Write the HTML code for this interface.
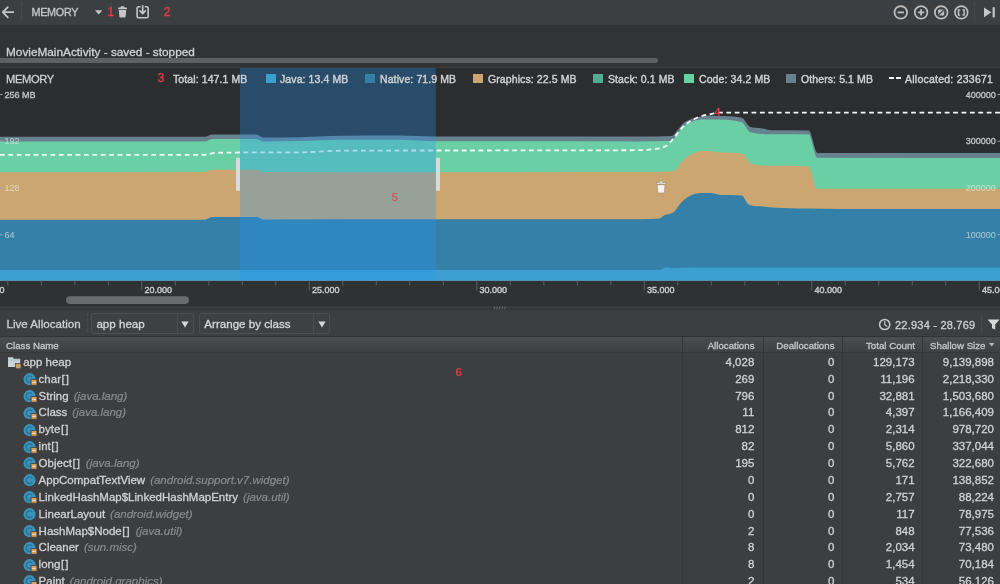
<!DOCTYPE html>
<html lang="en">
<head>
<meta charset="utf-8">
<title>Memory Profiler</title>
<style>
*{box-sizing:border-box;margin:0;padding:0}
html,body{width:1000px;height:584px;overflow:hidden;background:#3c3f41}
body{position:relative;font-family:"Liberation Sans",sans-serif;color:#c8c8c8;-webkit-text-stroke:.3px currentColor}
#root{position:absolute;left:0;top:0;width:1000px;height:584px;will-change:transform;transform:translateZ(0)}
.abs{position:absolute}
.t{position:absolute;white-space:nowrap;line-height:1}
#toolbar{left:0;top:0;width:1000px;height:25px;background:#3c3f41}
#session{left:0;top:25px;width:1000px;height:43px;background:#313335}
#chart{left:0;top:67px;width:1000px;height:243px;background:#2b2d2f}
#panel{left:0;top:310px;width:1000px;height:274px;background:#3c3e40}
.red{color:#e23a47;-webkit-text-stroke:.35px currentColor}
.leg{font-size:10.5px;letter-spacing:.1px;color:#d2d2d2;-webkit-text-stroke:.4px currentColor}
.sw{position:absolute;width:10px;height:9.8px}
.ax{font-size:9px;color:#cdcdcd;-webkit-text-stroke:.4px currentColor}
.axl{opacity:.9}
.axf{opacity:.7;color:#e6e6e6;-webkit-text-stroke:0}
.row{position:absolute;left:0;width:1000px;height:17px;font-size:11.5px;color:#d2d2d2}
.row .nm{position:absolute;top:0;white-space:nowrap;line-height:17px}
.row .pk{color:#8a8d8f;font-style:italic;margin-left:5px;-webkit-text-stroke:.2px currentColor}
.row .br{letter-spacing:1px;margin-left:.6px}
.row .n{position:absolute;top:0;text-align:right;line-height:17px;white-space:nowrap}
.hd{position:absolute;top:340.8px;font-size:9.7px;color:#c8c8c8;line-height:1;white-space:nowrap}
.vl{position:absolute;top:337px;width:1px;height:247px;background:#333537}
</style>
</head>
<body>
<div id="root">
<!-- ===== top toolbar ===== -->
<div id="toolbar" class="abs">
<svg class="abs" style="left:0;top:0" width="1000" height="25" viewBox="0 0 1000 25">
  <g stroke="#c6c6c6" stroke-width="1.8" fill="none" stroke-linecap="round" stroke-linejoin="round">
    <path d="M2.8 12.2 H13.3 M7.8 7.1 L2.8 12.2 L7.8 17.3"/>
  </g>
  <g stroke="#55585a" stroke-width="1" stroke-dasharray="1 1.5">
    <path d="M21.5 3 V20"/><path d="M111.5 3 V20"/><path d="M974.5 3 V20"/>
  </g>
  <path d="M95 10.3 H102.4 L98.7 14.6 Z" fill="#c6c6c6"/>
  <g fill="#c6c6c6">
    <rect x="118" y="7.6" width="9" height="1.5" rx=".4"/>
    <rect x="120.6" y="6.3" width="3.8" height="1.6" rx=".4"/>
    <path d="M118.8 9.8 H126.2 L125.6 16.8 Q125.5 17.6 124.7 17.6 H120.3 Q119.5 17.6 119.4 16.8 Z"/>
  </g>
  <g stroke="#c6c6c6" fill="none" stroke-width="1.6" stroke-linecap="round" stroke-linejoin="round">
    <path d="M140 6.7 H138.8 Q137.1 6.7 137.1 8.4 V16.1 Q137.1 17.8 138.8 17.8 H146.5 Q148.2 17.8 148.2 16.1 V8.4 Q148.2 6.7 146.5 6.7 H145.3"/>
    <path d="M142.65 5.8 V13.4 M140 10.9 L142.65 13.7 L145.3 10.9" stroke-width="1.7"/>
  </g>
  <g stroke="#bebebe" fill="none" stroke-width="1.7">
    <circle cx="900.8" cy="12.4" r="6.3"/>
    <circle cx="921.1" cy="12.4" r="6.3"/>
    <circle cx="941.2" cy="12.4" r="6.3"/>
    <circle cx="961.3" cy="12.4" r="6.3"/>
  </g>
  <g stroke="#bebebe" fill="none" stroke-width="1.8" stroke-linecap="butt">
    <path d="M897.6 12.4 H904"/>
    <path d="M917.9 12.4 H924.3 M921.1 9.2 V15.6"/>
    <path d="M960.2 9.9 H958.5 V14.9 H960.2 M962.4 9.9 H964.1 V14.9 H962.4" stroke-width="1.5"/>
  </g>
  <rect x="938.2" y="9.4" width="6" height="6" rx=".8" fill="#bebebe"/>
  <path d="M938.4 15.2 L944 9.6" stroke="#3c3f41" stroke-width="1.3"/>
  <path d="M984 7.4 L991.4 12.3 L984 17.2 Z" fill="#c6c6c6"/>
  <rect x="992.6" y="7.2" width="2.2" height="10.2" fill="#c6c6c6"/>
</svg>
<div class="t" style="left:31.5px;top:6.8px;font-size:10.8px;color:#c9c9c9;letter-spacing:-.3px">MEMORY</div>
<div class="t red" style="left:107.4px;top:6px;font-size:12px">1</div>
<div class="t red" style="left:163.8px;top:6px;font-size:12px">2</div>
</div>
<!-- ===== session strip ===== -->
<div id="session" class="abs">
<div class="t" style="left:6px;top:21.6px;font-size:11.8px;color:#d4d4d4">MovieMainActivity - saved - stopped</div>
<div class="abs" style="left:-4px;top:33px;width:661.5px;height:5px;border-radius:3px;background:#5e6163"></div>
</div>
<!-- ===== chart ===== -->
<div id="chart" class="abs">
<div class="abs" style="left:0;top:0;width:1000px;height:1px;background:#37383a"></div>
<svg class="abs" style="left:0;top:0" width="1000" height="243" viewBox="0 0 1000 243">
<rect x="0" y="213.6" width="1000" height="26" fill="#2e3233"/>
<path d="M0.0 69.8 C68.3 69.8 136.7 69.8 205.0 69.8 C207.3 69.8 209.7 67.4 212.0 67.4 C226.7 67.4 241.3 67.4 256.0 67.6 C258.3 67.6 260.7 70.4 263.0 70.4 C275.3 70.4 287.7 70.4 300.0 70.2 C313.3 70.0 326.7 68.9 340.0 68.8 C360.0 68.6 380.0 68.6 400.0 68.6 C412.0 68.6 424.0 69.6 436.0 69.6 C504.0 69.6 572.0 69.6 640.0 69.6 C650.7 69.6 661.3 69.6 672.0 69.0 C673.7 68.9 675.3 65.6 677.0 63.8 C679.4 61.2 681.8 57.6 684.2 55.6 C686.6 53.6 689.0 52.9 691.4 52.0 C694.8 50.7 698.3 49.8 701.7 49.2 C704.4 48.7 707.2 48.4 709.9 48.4 C712.6 48.4 715.4 48.9 718.1 49.0 C726.0 49.2 733.8 49.0 741.7 50.7 C744.5 51.3 747.2 58.6 750.0 59.7 C753.8 61.1 757.5 60.8 761.3 61.2 C764.7 61.6 768.1 63.2 771.5 63.2 C783.9 63.2 796.2 63.2 808.6 63.5 C811.6 63.6 814.6 86.0 817.6 86.0 C878.4 86.0 939.2 86.0 1000.0 86.0 L1000 213.6 L0 213.6 Z" fill="#67818f"/>
<path d="M0.0 74.5 C68.3 74.5 136.7 74.5 205.0 74.5 C207.3 74.5 209.7 72.0 212.0 72.0 C226.7 72.0 241.3 72.0 256.0 72.0 C258.3 72.0 260.7 74.4 263.0 74.4 C275.3 74.4 287.7 74.3 300.0 74.0 C313.3 73.7 326.7 72.8 340.0 72.8 C360.0 72.8 380.0 72.8 400.0 72.8 C412.0 72.8 424.0 74.2 436.0 74.2 C504.0 74.4 572.0 74.4 640.0 74.4 C650.3 74.4 660.5 74.4 670.8 74.1 C673.2 74.0 675.6 68.7 678.0 65.9 C680.1 63.5 682.1 60.4 684.2 58.7 C686.6 56.7 689.0 55.9 691.4 55.0 C694.8 53.7 698.3 52.6 701.7 52.6 C705.1 52.6 708.6 52.6 712.0 52.6 C721.9 52.6 731.8 52.6 741.7 55.2 C744.5 55.9 747.2 64.0 750.0 64.9 C757.2 67.2 764.3 67.2 771.5 67.2 C783.9 67.2 796.2 67.2 808.6 67.2 C811.5 67.2 814.5 90.8 817.4 90.8 C878.3 91.0 939.1 91.0 1000.0 91.0 L1000 213.6 L0 213.6 Z" fill="#6bcfa5"/>
<path d="M0.0 105.3 C68.3 105.3 136.7 105.3 205.0 105.0 C207.3 105.0 209.7 102.8 212.0 102.8 C226.7 102.8 241.3 102.8 256.0 102.8 C258.3 102.8 260.7 105.0 263.0 105.0 C320.7 105.2 378.3 105.2 436.0 105.2 C504.0 105.2 572.0 105.0 640.0 105.0 C651.3 105.0 662.7 105.0 674.0 103.9 C676.9 103.6 679.7 96.7 682.6 94.0 C685.4 91.3 688.2 89.1 691.0 87.6 C695.3 85.3 699.7 83.8 704.0 83.8 C710.1 83.8 716.1 85.5 722.2 85.6 C729.1 85.8 735.9 85.6 742.8 86.9 C745.5 87.4 748.3 95.9 751.0 96.7 C757.8 98.8 764.7 98.8 771.5 98.8 C783.8 98.8 796.2 98.8 808.5 99.4 C811.4 99.5 814.3 121.8 817.2 121.8 C878.1 121.8 939.1 121.8 1000.0 121.8 L1000 213.6 L0 213.6 Z" fill="#cba670"/>
<path d="M0.0 152.8 C68.3 152.8 136.7 152.8 205.0 152.8 C207.3 152.8 209.7 150.0 212.0 150.0 C227.0 150.0 242.0 150.0 257.0 150.0 C259.0 150.0 261.0 152.5 263.0 152.5 C320.7 152.5 378.3 152.3 436.0 152.3 C504.0 152.3 572.0 152.2 640.0 152.2 C646.2 152.2 652.3 152.2 658.5 151.8 C660.6 151.7 662.6 149.1 664.7 148.1 C667.8 146.7 670.8 147.5 673.9 145.0 C676.3 143.1 678.7 138.3 681.1 135.8 C683.8 133.0 686.6 130.7 689.3 129.2 C693.4 127.0 697.6 125.9 701.7 125.9 C704.4 125.9 707.2 125.9 709.9 125.9 C714.0 125.9 718.1 127.9 722.2 128.0 C728.7 128.1 735.2 128.0 741.7 128.6 C744.1 128.8 746.5 137.0 748.9 137.8 C753.7 139.5 758.5 139.2 763.3 139.5 C766.0 139.7 768.8 140.3 771.5 140.5 C783.8 141.4 796.2 141.3 808.5 141.5 C819.0 141.7 829.5 141.9 840.0 141.9 C893.3 142.0 946.7 142.0 1000.0 142.0 L1000 213.6 L0 213.6 Z" fill="#3480a9"/>
<path d="M0.0 203.0 C220.0 203.0 440.0 203.0 660.0 203.0 C662.0 203.0 664.0 200.3 666.0 200.3 C668.0 200.3 670.0 201.0 672.0 201.0 C681.3 201.0 690.7 200.6 700.0 200.6 C800.0 200.6 900.0 200.6 1000.0 200.6 L1000 213.6 L0 213.6 Z" fill="#3d9fd1"/>
<path d="M0.0 87.8 C68.3 87.8 136.7 87.8 205.0 87.8 C208.3 87.8 211.7 85.9 215.0 85.8 C243.3 85.3 271.7 85.4 300.0 85.3 C315.0 85.2 330.0 83.6 345.0 83.6 C443.3 83.4 541.7 83.6 640.0 83.2 C644.1 83.2 648.2 83.0 652.3 82.3 C657.1 81.5 661.9 81.8 666.7 78.6 C669.1 77.0 671.5 73.8 673.9 71.0 C676.3 68.2 678.7 64.3 681.1 61.8 C684.5 58.2 688.0 55.7 691.4 53.6 C694.8 51.5 698.3 50.1 701.7 49.0 C705.1 47.9 708.6 47.5 712.0 46.8 C714.0 46.4 716.1 45.7 718.1 45.7 C812.1 45.7 906.0 45.7 1000.0 45.7" fill="none" stroke="#f4f7f6" stroke-width="1.8" stroke-dasharray="4.8 3.6"/>
<path d="M7.8 213.6 V218.6 M41.3 213.6 V218.6 M74.8 213.6 V218.6 M108.3 213.6 V218.6 M141.8 213.6 V223.4 M175.3 213.6 V218.6 M208.8 213.6 V218.6 M242.3 213.6 V218.6 M275.8 213.6 V218.6 M309.3 213.6 V223.4 M342.8 213.6 V218.6 M376.3 213.6 V218.6 M409.8 213.6 V218.6 M443.3 213.6 V218.6 M476.8 213.6 V223.4 M510.3 213.6 V218.6 M543.8 213.6 V218.6 M577.3 213.6 V218.6 M610.8 213.6 V218.6 M644.3 213.6 V223.4 M677.8 213.6 V218.6 M711.3 213.6 V218.6 M744.8 213.6 V218.6 M778.3 213.6 V218.6 M811.8 213.6 V223.4 M845.3 213.6 V218.6 M878.8 213.6 V218.6 M912.3 213.6 V218.6 M945.8 213.6 V218.6 M979.3 213.6 V223.4" stroke="#5a5e60" stroke-width="1" fill="none"/>
<path d="M0 27.5 H2.5 M997.6 27.5 H1000 M0 74.2 H2.5 M997.6 74.2 H1000 M0 120.9 H2.5 M997.6 120.9 H1000 M0 167.6 H2.5 M997.6 167.6 H1000" stroke="#a0a2a3" stroke-width="1" fill="none"/>
<rect x="240" y="1" width="195.8" height="212.6" fill="rgba(35,149,245,0.30)"/>
<rect x="236" y="90.5" width="4" height="33.5" rx="1.6" fill="#d9dadb"/>
<rect x="436" y="90.5" width="4" height="33.5" rx="1.6" fill="#d9dadb"/>
<g fill="#f4f2f6" stroke="#5d5546" stroke-width=".5" stroke-opacity=".6"><rect x="656.6" y="115.5" width="9" height="1.6" rx=".5"/><rect x="659.3" y="114.3" width="3.6" height="1.6" rx=".5"/><path d="M657.3 117.7 h7.6 l-.5 7.4 q-.1 .8 -.9 .8 h-4.8 q-.8 0 -.9 -.8 z"/></g>
<rect x="66" y="229.3" width="123" height="7.6" rx="3.8" fill="#6a6b6d"/>
</svg>
<div class="t" style="left:6px;top:6.9px;font-size:11.2px;letter-spacing:-.4px;color:#d0d0d0">MEMORY</div>
<div class="t red" style="left:157.6px;top:4.9px;font-size:12.4px">3</div>
<div class="t leg" style="left:173px;top:7.2px">Total: 147.1 MB</div>
<div class="sw" style="left:266px;top:6.6px;background:#3d9fd1"></div><div class="t leg" style="left:280px;top:7.2px">Java: 13.4 MB</div>
<div class="sw" style="left:365px;top:6.6px;background:#3480a9"></div><div class="t leg" style="left:380px;top:7.2px">Native: 71.9 MB</div>
<div class="sw" style="left:473px;top:6.6px;background:#cba670"></div><div class="t leg" style="left:488px;top:7.2px">Graphics: 22.5 MB</div>
<div class="sw" style="left:593px;top:6.6px;background:#4fae8e"></div><div class="t leg" style="left:608px;top:7.2px">Stack: 0.1 MB</div>
<div class="sw" style="left:684px;top:6.6px;background:#6bcfa5"></div><div class="t leg" style="left:699px;top:7.2px">Code: 34.2 MB</div>
<div class="sw" style="left:786px;top:6.6px;background:#67818f"></div><div class="t leg" style="left:801px;top:7.2px">Others: 5.1 MB</div>
<div class="t leg" style="left:905px;top:7.2px;letter-spacing:0.24px">Allocated: 233671</div>
<div class="abs" style="left:889px;top:10px;width:5px;height:2.4px;background:#f4f4f4"></div><div class="abs" style="left:895.6px;top:10px;width:5px;height:2.4px;background:#f4f4f4"></div>
<div class="t ax axl" style="left:4.6px;top:23.5px">256 MB</div><div class="t ax axf" style="left:4.6px;top:70.2px">192</div><div class="t ax axf" style="left:4.6px;top:116.9px">128</div><div class="t ax axf" style="left:4.6px;top:163.6px">64</div>
<div class="t ax axl" style="right:4.3px;top:23.5px">400000</div><div class="t ax axl" style="right:4.3px;top:70.2px">300000</div><div class="t ax axf" style="right:4.3px;top:116.9px">200000</div><div class="t ax axf" style="right:4.3px;top:163.6px">100000</div>
<div class="t ax" style="left:-23.1px;top:219.4px">15.000</div><div class="t ax" style="left:144.4px;top:219.4px">20.000</div><div class="t ax" style="left:311.9px;top:219.4px">25.000</div><div class="t ax" style="left:479.4px;top:219.4px">30.000</div><div class="t ax" style="left:646.9px;top:219.4px">35.000</div><div class="t ax" style="left:814.4px;top:219.4px">40.000</div><div class="t ax" style="left:981.9px;top:219.4px">45.000</div>
<div class="t red" style="left:714.6px;top:40.2px;font-size:11px">4</div>
<div class="t red" style="left:391.4px;top:124.6px;font-size:11.5px;opacity:.8;-webkit-text-stroke:.15px currentColor">5</div>
<div class="abs" style="left:0;top:238.5px;width:1000px;height:4.5px;background:#393b3d;border-bottom:1px solid #323335"></div>
<svg class="abs" style="left:493px;top:239px" width="14" height="4"><path d="M1 3.4 L2 .6 M3.6 3.4 L4.6 .6 M6.2 3.4 L7.2 .6 M8.8 3.4 L9.8 .6 M11.4 3.4 L12.4 .6" stroke="#77797b" stroke-width=".8"/></svg>
</div>
<!-- ===== bottom panel ===== -->
<div id="panel" class="abs">
<div class="t" style="left:6.5px;top:7.7px;font-size:11.6px;color:#d0d0d0">Live Allocation</div>
<div class="abs" style="left:86.5px;top:4px;width:1px;height:18px;background:repeating-linear-gradient(#4e5153 0 1px,transparent 1px 2.5px)"></div>
<div class="abs" style="left:91px;top:3.3px;width:102.6px;height:20.3px;border:1px solid #4c4f51;border-radius:2.5px;background:#3e4143"></div><div class="abs" style="left:176.6px;top:5px;width:1px;height:18px;background:#4c4f51"></div><div class="t" style="left:96.4px;top:7.7px;font-size:11.6px;color:#d8d8d8">app heap</div><svg class="abs" style="left:181.2px;top:11px" width="8" height="7"><path d="M0.4 0.4 H7.6 L4 6.4 Z" fill="#d8d8d8"/></svg>
<div class="abs" style="left:198.9px;top:3.3px;width:131.3px;height:20.3px;border:1px solid #4c4f51;border-radius:2.5px;background:#3e4143"></div><div class="abs" style="left:313.2px;top:5px;width:1px;height:18px;background:#4c4f51"></div><div class="t" style="left:204.3px;top:7.7px;font-size:11.6px;color:#d8d8d8">Arrange by class</div><svg class="abs" style="left:317.8px;top:11px" width="8" height="7"><path d="M0.4 0.4 H7.6 L4 6.4 Z" fill="#d8d8d8"/></svg>
<svg class="abs" style="left:877px;top:6px" width="123" height="20" viewBox="877 6 123 20"><circle cx="884.7" cy="14.5" r="5.1" fill="none" stroke="#c8c8c8" stroke-width="1.5"/><path d="M884.7 11.4 V14.7 L886.9 16.4" fill="none" stroke="#c8c8c8" stroke-width="1.2" stroke-linecap="round"/><path d="M981.5 6 V22" stroke="#595c5e" stroke-dasharray="1 1.5"/><path d="M987.6 9.6 H999.6 L995.2 14.6 V19.6 L992 18.2 V14.6 Z" fill="#d8d8d8"/></svg>
<div class="t" style="left:895px;top:9.5px;font-size:11px;letter-spacing:.22px;color:#d0d0d0">22.934 - 28.769</div>
<div class="abs" style="left:0;top:25.9px;width:1000px;height:17.6px;background:linear-gradient(#4b4d4f,#3e4042);border-top:1px solid #303234;border-bottom:1px solid #35383a"></div>
</div>
<div class="hd" style="left:6px">Class Name</div><div class="hd" style="right:245.5px">Allocations</div><div class="hd" style="right:165.5px">Deallocations</div><div class="hd" style="right:85px">Total Count</div><div class="hd" style="right:14.5px">Shallow Size</div>
<svg class="abs" style="left:989.4px;top:342.6px" width="6" height="4"><path d="M0 0 H5.4 L2.7 3.4 Z" fill="#b8b8b8"/></svg>
<div class="vl" style="left:682px"></div><div class="vl" style="left:762.5px"></div><div class="vl" style="left:842px"></div><div class="vl" style="left:922px"></div>
<div class="row" style="top:353.90px"><svg class="abs" style="left:8px;top:3px" width="14" height="12" viewBox="0 0 14 12"><path d="M0 0.2 H4.8 L5.8 1.8 H12.2 V10 H0 Z" fill="#c9d4d8"/><rect x="0" y="2.6" width="12.2" height=".7" fill="#a3b1b7"/><rect x="7.6" y="6.4" width="5.4" height="5.4" fill="#c4a06a" stroke="#3c3f41" stroke-width=".7"/></svg><span class="nm" style="left:23.2px">app heap</span><span class="n" style="right:245.7px">4,028</span><span class="n" style="right:165.7px">0</span><span class="n" style="right:85.4px">129,173</span><span class="n" style="right:6px">9,139,898</span></div>
<div class="row" style="top:370.76px"><svg class="abs" style="left:22.6px;top:2.4px" width="15" height="13" viewBox="0 0 15 13"><circle cx="6.6" cy="6.2" r="6.1" fill="#3893bd"/><path d="M9.2 4.2 A3.3 3.3 0 1 0 9.2 8.2" fill="none" stroke="#2a556b" stroke-width="1.4" opacity=".55"/><rect x="8" y="6.6" width="6" height="5.6" fill="#d89f5a" stroke="#3c3e40" stroke-width=".8"/><rect x="9.2" y="8.9" width="3.6" height="1" fill="#f3dcbc"/></svg><span class="nm" style="left:38.6px">char<span class="br">[]</span></span><span class="n" style="right:245.7px">269</span><span class="n" style="right:165.7px">0</span><span class="n" style="right:85.4px">11,196</span><span class="n" style="right:6px">2,218,330</span></div>
<div class="row" style="top:387.62px"><svg class="abs" style="left:22.6px;top:2.4px" width="15" height="13" viewBox="0 0 15 13"><circle cx="6.6" cy="6.2" r="6.1" fill="#3893bd"/><path d="M9.2 4.2 A3.3 3.3 0 1 0 9.2 8.2" fill="none" stroke="#2a556b" stroke-width="1.4" opacity=".55"/><rect x="8" y="6.6" width="6" height="5.6" fill="#d89f5a" stroke="#3c3e40" stroke-width=".8"/><rect x="9.2" y="8.9" width="3.6" height="1" fill="#f3dcbc"/></svg><span class="nm" style="left:38.6px">String<span class="pk">(java.lang)</span></span><span class="n" style="right:245.7px">796</span><span class="n" style="right:165.7px">0</span><span class="n" style="right:85.4px">32,881</span><span class="n" style="right:6px">1,503,680</span></div>
<div class="row" style="top:404.48px"><svg class="abs" style="left:22.6px;top:2.4px" width="15" height="13" viewBox="0 0 15 13"><circle cx="6.6" cy="6.2" r="6.1" fill="#3893bd"/><path d="M9.2 4.2 A3.3 3.3 0 1 0 9.2 8.2" fill="none" stroke="#2a556b" stroke-width="1.4" opacity=".55"/><rect x="8" y="6.6" width="6" height="5.6" fill="#d89f5a" stroke="#3c3e40" stroke-width=".8"/><rect x="9.2" y="8.9" width="3.6" height="1" fill="#f3dcbc"/></svg><span class="nm" style="left:38.6px">Class<span class="pk">(java.lang)</span></span><span class="n" style="right:245.7px">11</span><span class="n" style="right:165.7px">0</span><span class="n" style="right:85.4px">4,397</span><span class="n" style="right:6px">1,166,409</span></div>
<div class="row" style="top:421.34px"><svg class="abs" style="left:22.6px;top:2.4px" width="15" height="13" viewBox="0 0 15 13"><circle cx="6.6" cy="6.2" r="6.1" fill="#3893bd"/><path d="M9.2 4.2 A3.3 3.3 0 1 0 9.2 8.2" fill="none" stroke="#2a556b" stroke-width="1.4" opacity=".55"/><rect x="8" y="6.6" width="6" height="5.6" fill="#d89f5a" stroke="#3c3e40" stroke-width=".8"/><rect x="9.2" y="8.9" width="3.6" height="1" fill="#f3dcbc"/></svg><span class="nm" style="left:38.6px">byte<span class="br">[]</span></span><span class="n" style="right:245.7px">812</span><span class="n" style="right:165.7px">0</span><span class="n" style="right:85.4px">2,314</span><span class="n" style="right:6px">978,720</span></div>
<div class="row" style="top:438.20px"><svg class="abs" style="left:22.6px;top:2.4px" width="15" height="13" viewBox="0 0 15 13"><circle cx="6.6" cy="6.2" r="6.1" fill="#3893bd"/><path d="M9.2 4.2 A3.3 3.3 0 1 0 9.2 8.2" fill="none" stroke="#2a556b" stroke-width="1.4" opacity=".55"/><rect x="8" y="6.6" width="6" height="5.6" fill="#d89f5a" stroke="#3c3e40" stroke-width=".8"/><rect x="9.2" y="8.9" width="3.6" height="1" fill="#f3dcbc"/></svg><span class="nm" style="left:38.6px">int<span class="br">[]</span></span><span class="n" style="right:245.7px">82</span><span class="n" style="right:165.7px">0</span><span class="n" style="right:85.4px">5,860</span><span class="n" style="right:6px">337,044</span></div>
<div class="row" style="top:455.06px"><svg class="abs" style="left:22.6px;top:2.4px" width="15" height="13" viewBox="0 0 15 13"><circle cx="6.6" cy="6.2" r="6.1" fill="#3893bd"/><path d="M9.2 4.2 A3.3 3.3 0 1 0 9.2 8.2" fill="none" stroke="#2a556b" stroke-width="1.4" opacity=".55"/><rect x="8" y="6.6" width="6" height="5.6" fill="#d89f5a" stroke="#3c3e40" stroke-width=".8"/><rect x="9.2" y="8.9" width="3.6" height="1" fill="#f3dcbc"/></svg><span class="nm" style="left:38.6px">Object<span class="br">[]</span><span class="pk">(java.lang)</span></span><span class="n" style="right:245.7px">195</span><span class="n" style="right:165.7px">0</span><span class="n" style="right:85.4px">5,762</span><span class="n" style="right:6px">322,680</span></div>
<div class="row" style="top:471.92px"><svg class="abs" style="left:22.6px;top:2.4px" width="15" height="13" viewBox="0 0 15 13"><circle cx="6.6" cy="6.2" r="6.1" fill="#3893bd"/><path d="M9.2 4.2 A3.3 3.3 0 1 0 9.2 8.2" fill="none" stroke="#2a556b" stroke-width="1.4" opacity=".55"/></svg><span class="nm" style="left:38.6px">AppCompatTextView<span class="pk">(android.support.v7.widget)</span></span><span class="n" style="right:245.7px">0</span><span class="n" style="right:165.7px">0</span><span class="n" style="right:85.4px">171</span><span class="n" style="right:6px">138,852</span></div>
<div class="row" style="top:488.78px"><svg class="abs" style="left:22.6px;top:2.4px" width="15" height="13" viewBox="0 0 15 13"><circle cx="6.6" cy="6.2" r="6.1" fill="#3893bd"/><path d="M9.2 4.2 A3.3 3.3 0 1 0 9.2 8.2" fill="none" stroke="#2a556b" stroke-width="1.4" opacity=".55"/><rect x="8" y="6.6" width="6" height="5.6" fill="#d89f5a" stroke="#3c3e40" stroke-width=".8"/><rect x="9.2" y="8.9" width="3.6" height="1" fill="#f3dcbc"/></svg><span class="nm" style="left:38.6px">LinkedHashMap$LinkedHashMapEntry<span class="pk">(java.util)</span></span><span class="n" style="right:245.7px">0</span><span class="n" style="right:165.7px">0</span><span class="n" style="right:85.4px">2,757</span><span class="n" style="right:6px">88,224</span></div>
<div class="row" style="top:505.64px"><svg class="abs" style="left:22.6px;top:2.4px" width="15" height="13" viewBox="0 0 15 13"><circle cx="6.6" cy="6.2" r="6.1" fill="#3893bd"/><path d="M9.2 4.2 A3.3 3.3 0 1 0 9.2 8.2" fill="none" stroke="#2a556b" stroke-width="1.4" opacity=".55"/></svg><span class="nm" style="left:38.6px">LinearLayout<span class="pk">(android.widget)</span></span><span class="n" style="right:245.7px">0</span><span class="n" style="right:165.7px">0</span><span class="n" style="right:85.4px">117</span><span class="n" style="right:6px">78,975</span></div>
<div class="row" style="top:522.50px"><svg class="abs" style="left:22.6px;top:2.4px" width="15" height="13" viewBox="0 0 15 13"><circle cx="6.6" cy="6.2" r="6.1" fill="#3893bd"/><path d="M9.2 4.2 A3.3 3.3 0 1 0 9.2 8.2" fill="none" stroke="#2a556b" stroke-width="1.4" opacity=".55"/><rect x="8" y="6.6" width="6" height="5.6" fill="#d89f5a" stroke="#3c3e40" stroke-width=".8"/><rect x="9.2" y="8.9" width="3.6" height="1" fill="#f3dcbc"/></svg><span class="nm" style="left:38.6px">HashMap$Node<span class="br">[]</span><span class="pk">(java.util)</span></span><span class="n" style="right:245.7px">2</span><span class="n" style="right:165.7px">0</span><span class="n" style="right:85.4px">848</span><span class="n" style="right:6px">77,536</span></div>
<div class="row" style="top:539.36px"><svg class="abs" style="left:22.6px;top:2.4px" width="15" height="13" viewBox="0 0 15 13"><circle cx="6.6" cy="6.2" r="6.1" fill="#3893bd"/><path d="M9.2 4.2 A3.3 3.3 0 1 0 9.2 8.2" fill="none" stroke="#2a556b" stroke-width="1.4" opacity=".55"/><rect x="8" y="6.6" width="6" height="5.6" fill="#d89f5a" stroke="#3c3e40" stroke-width=".8"/><rect x="9.2" y="8.9" width="3.6" height="1" fill="#f3dcbc"/></svg><span class="nm" style="left:38.6px">Cleaner<span class="pk">(sun.misc)</span></span><span class="n" style="right:245.7px">8</span><span class="n" style="right:165.7px">0</span><span class="n" style="right:85.4px">2,034</span><span class="n" style="right:6px">73,480</span></div>
<div class="row" style="top:556.22px"><svg class="abs" style="left:22.6px;top:2.4px" width="15" height="13" viewBox="0 0 15 13"><circle cx="6.6" cy="6.2" r="6.1" fill="#3893bd"/><path d="M9.2 4.2 A3.3 3.3 0 1 0 9.2 8.2" fill="none" stroke="#2a556b" stroke-width="1.4" opacity=".55"/><rect x="8" y="6.6" width="6" height="5.6" fill="#d89f5a" stroke="#3c3e40" stroke-width=".8"/><rect x="9.2" y="8.9" width="3.6" height="1" fill="#f3dcbc"/></svg><span class="nm" style="left:38.6px">long<span class="br">[]</span></span><span class="n" style="right:245.7px">8</span><span class="n" style="right:165.7px">0</span><span class="n" style="right:85.4px">1,454</span><span class="n" style="right:6px">70,184</span></div>
<div class="row" style="top:573.08px"><svg class="abs" style="left:22.6px;top:2.4px" width="15" height="13" viewBox="0 0 15 13"><circle cx="6.6" cy="6.2" r="6.1" fill="#3893bd"/><path d="M9.2 4.2 A3.3 3.3 0 1 0 9.2 8.2" fill="none" stroke="#2a556b" stroke-width="1.4" opacity=".55"/><rect x="8" y="6.6" width="6" height="5.6" fill="#d89f5a" stroke="#3c3e40" stroke-width=".8"/><rect x="9.2" y="8.9" width="3.6" height="1" fill="#f3dcbc"/></svg><span class="nm" style="left:38.6px">Paint<span class="pk">(android.graphics)</span></span><span class="n" style="right:245.7px">2</span><span class="n" style="right:165.7px">0</span><span class="n" style="right:85.4px">534</span><span class="n" style="right:6px">56,126</span></div>
<div class="t red" style="left:455.6px;top:366.6px;font-size:11.5px">6</div>
</div>
</body>
</html>
